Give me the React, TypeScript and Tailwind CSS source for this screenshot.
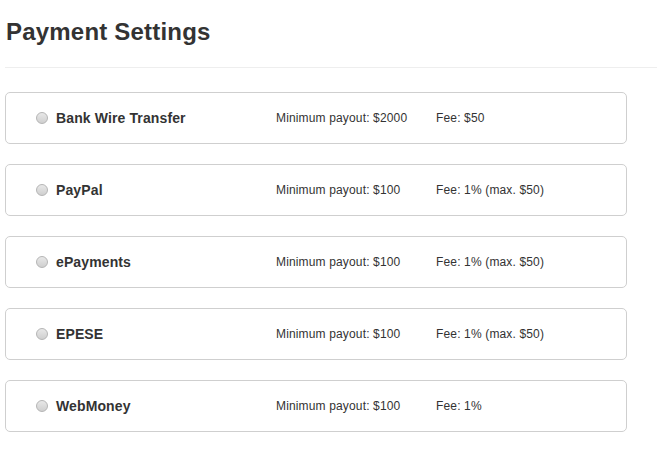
import React from 'react';

type Method = {
  name: string;
  minPayout: string;
  fee: string;
};

const methods: Method[] = [
  { name: 'Bank Wire Transfer', minPayout: '$2000', fee: '$50' },
  { name: 'PayPal', minPayout: '$100', fee: '1% (max. $50)' },
  { name: 'ePayments', minPayout: '$100', fee: '1% (max. $50)' },
  { name: 'EPESE', minPayout: '$100', fee: '1% (max. $50)' },
  { name: 'WebMoney', minPayout: '$100', fee: '1%' },
];

function Radio() {
  return (
    <span className="block w-[12px] h-[12px] rounded-full border border-[#b5b5b5] bg-gradient-to-b from-[#e8e8e8] to-[#cfcfcf] shrink-0" />
  );
}

function MethodRow({ method }: { method: Method }) {
  return (
    <label className="flex items-center h-[52px] w-[622px] border border-[#cfcfcf] rounded-[5px] bg-white pl-[30px] cursor-pointer">
      <Radio />
      <span className="ml-[8px] w-[220px] text-[14px] font-bold text-[#333] tracking-[0.12px]">
        {method.name}
      </span>
      <span className="w-[160px] text-[12px] text-[#333] tracking-[0.15px]">
        Minimum payout: {method.minPayout}
      </span>
      <span className="text-[12px] text-[#333] tracking-[0.15px]">Fee: {method.fee}</span>
    </label>
  );
}

export default function App() {
  return (
    <div
      className="min-h-screen bg-white pl-[5px]"
      style={{ fontFamily: '"Liberation Sans", Arial, sans-serif' }}
    >
      {/* Header */}
      <h1 className="pt-[19px] text-[24px] leading-[26px] font-bold text-[#333] pl-[1px] tracking-[0.2px]">
        Payment Settings
      </h1>
      <div className="mt-[22px] border-t border-[#eeeeee]" />

      {/* Methods */}
      <div className="mt-[24px] flex flex-col gap-[20px]">
        {methods.map((m) => (
          <MethodRow key={m.name} method={m} />
        ))}
      </div>
    </div>
  );
}
